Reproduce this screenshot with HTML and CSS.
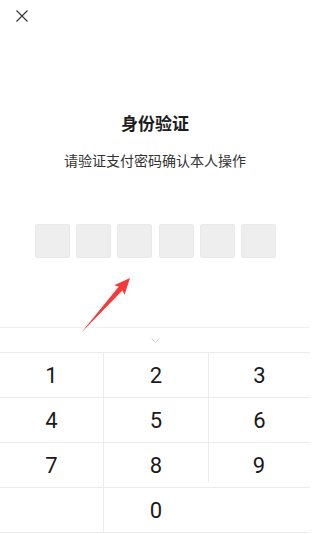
FILE: index.html
```html
<!DOCTYPE html>
<html lang="zh-CN">
<head>
<meta charset="utf-8">
<title>身份验证</title>
<link rel="stylesheet" href="styles.css">
</head>
<body>
<div class="page">
  <div class="topbar">
    <svg class="close" width="12" height="12" viewBox="0 0 12 12"><path d="M0.5 0.5L11.5 11.5M11.5 0.5L0.5 11.5" stroke="#333" stroke-width="1.1" fill="none"/></svg>
  </div>
  <h1 class="title">身份验证</h1>
  <p class="subtitle">请验证支付密码确认本人操作</p>
  <div class="pin">
    <span class="pin-box"></span><span class="pin-box"></span><span class="pin-box"></span><span class="pin-box"></span><span class="pin-box"></span><span class="pin-box"></span>
  </div>
  <div class="keypad">
    <div class="toggle">
      <svg width="9" height="5" viewBox="0 0 9 5"><path d="M0.5 0.5L4.5 4.5L8.5 0.5" stroke="#cfcfcf" stroke-width="1" fill="none"/></svg>
    </div>
    <div class="keys">
      <div class="key">1</div><div class="key mid">2</div><div class="key right">3</div>
      <div class="key">4</div><div class="key mid">5</div><div class="key right">6</div>
      <div class="key">7</div><div class="key mid">8</div><div class="key right short">9</div>
      <div class="key"></div><div class="key mid">0</div><div class="key"></div>
    </div>
  </div>
  <svg class="arrow" width="310" height="534" viewBox="0 0 310 534">
    <polygon points="130,278 124.6,294.7 122.4,290.4 81,333 118.8,286.6 114.2,285.3" fill="#f43a3a"/>
  </svg>
</div>
</body>
</html>
```
FILE: styles.css
```css
html, body {
  margin: 0;
  padding: 0;
  background: #ffffff;
}
.page {
  position: relative;
  width: 310px;
  height: 534px;
  display: flex;
  flex-direction: column;
  font-family: "Noto Sans CJK SC", "Noto Sans", sans-serif;
  color: #222;
  overflow: hidden;
}
.topbar {
  padding: 10px 0 0 16px;
  height: 12px;
}
.close {
  display: block;
}
.title {
  margin: 89px 0 0;
  font-size: 17px;
  line-height: 24px;
  font-weight: 700;
  text-align: center;
  color: #1c1c1c;
}
.subtitle {
  margin: 15px 0 0;
  font-size: 14px;
  line-height: 20px;
  text-align: center;
  color: #333;
}
.pin {
  margin-top: 54px;
  display: flex;
  justify-content: center;
  gap: 6.2px;
  padding-left: 1px;
}
.pin-box {
  width: 35px;
  height: 34px;
  border-radius: 3px;
  background: #eeeeee;
  box-shadow: inset 0 0 0 1px #e9e9e9;
}
.keypad {
  margin-top: auto;
  margin-bottom: 1px;
  border-top: 1px solid #f0f0f0;
}
.toggle {
  height: 24px;
  display: flex;
  align-items: center;
  justify-content: center;
  padding-left: 1px;
}
.toggle svg {
  display: block;
  margin-top: 1px;
}
.keys {
  display: grid;
  grid-template-columns: 103px 105px 1fr;
  border-bottom: 1px solid #ececec;
}
.key {
  height: 44px;
  border-top: 1px solid #ececec;
  display: flex;
  align-items: center;
  justify-content: center;
  font-family: Roboto, "Noto Sans", sans-serif;
  font-size: 22px;
  color: #1a1a1a;
}
.key.mid {
  border-left: 1px solid #ececec;
}
.key.right {
  border-left: 1px solid #ececec;
}
.key.short {
  border-left: none;
  background: linear-gradient(#ececec, #ececec) left top / 1px 39px no-repeat;
}
.arrow {
  position: absolute;
  left: 0;
  top: 0;
  pointer-events: none;
}
```
